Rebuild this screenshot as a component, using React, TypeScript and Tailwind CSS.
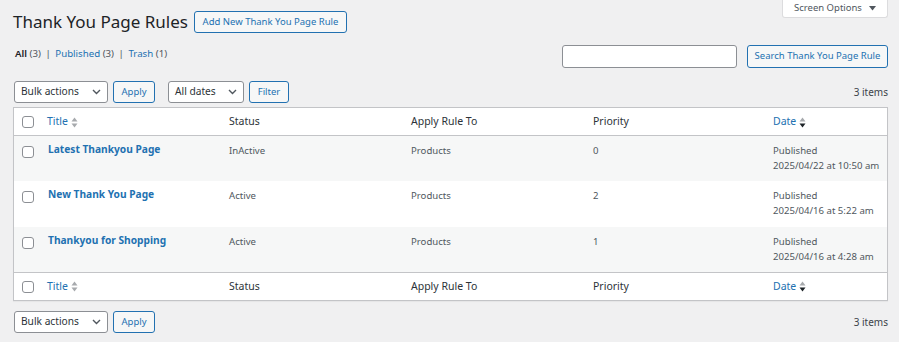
import React from "react";

const rows = [
  { title: "Latest Thankyou Page", status: "InActive", rule: "Products", priority: "0", date: "2025/04/22 at 10:50 am", bg: "bg-[#f6f7f7]", h: "h-[45px]" },
  { title: "New Thank You Page", status: "Active", rule: "Products", priority: "2", date: "2025/04/16 at 5:22 am", bg: "bg-white", h: "h-[46px]" },
  { title: "Thankyou for Shopping", status: "Active", rule: "Products", priority: "1", date: "2025/04/16 at 4:28 am", bg: "bg-[#f6f7f7]", h: "h-[45px]" },
];

const cols = "grid grid-cols-[23px_182px_182px_182px_180px_1fr]";

function Checkbox() {
  return <span className="block w-[12px] h-[12px] rounded-[3px] border border-[#8c8f94] bg-white" />;
}

function SortIcon({ active }: { active?: boolean }) {
  return (
    <svg width="7" height="11" viewBox="0 0 7 11" className="ml-[3px]">
      <path d="M3.5 0.5 L6.5 4.5 L0.5 4.5 Z" fill="#a7aaad" />
      <path d="M3.5 10.5 L6.5 6.5 L0.5 6.5 Z" fill={active ? "#1d2327" : "#a7aaad"} />
    </svg>
  );
}

function Chevron() {
  return (
    <svg width="9" height="6" viewBox="0 0 9 6">
      <path d="M1 1 L4.5 4.5 L8 1" fill="none" stroke="#50575e" strokeWidth="1.4" />
    </svg>
  );
}

function Select({ label, w }: { label: string; w: string }) {
  return (
    <div className={`${w} h-[22px] flex items-center justify-between bg-white border border-[#8c8f94] rounded-[3px] pl-[6px] pr-[6px] text-[10.2px] text-[#2c3338]`}>
      <span>{label}</span>
      <Chevron />
    </div>
  );
}

function Btn({ label, w }: { label: string; w: string }) {
  return (
    <div className={`${w} h-[22px] flex items-center justify-center bg-[#f6f7f7] border border-[#2271b1] rounded-[3px] text-[9.5px] text-[#2271b1]`}>
      {label}
    </div>
  );
}

function HeadRow({ top }: { top?: boolean }) {
  return (
    <div className={`${cols} h-[28px] items-center bg-white text-[10.5px] text-[#2c3338] ${top ? "border-b border-[#c3c4c7] pt-[1px]" : "border-t border-[#c3c4c7]"}`}>
      <div className="pl-[8px]"><Checkbox /></div>
      <div className="pl-[10px] flex items-center text-[#2271b1]">Title<SortIcon /></div>
      <div className="pl-[10px]">Status</div>
      <div className="pl-[10px]">Apply Rule To</div>
      <div className="pl-[10px]">Priority</div>
      <div className="pl-[10px] flex items-center text-[#2271b1]">Date<SortIcon active /></div>
    </div>
  );
}

export default function App() {
  return (
    <div className="relative min-h-[342px] bg-[#f0f0f1] font-['Noto_Sans',sans-serif] pl-[13px] pr-[11px]">
      <div className="absolute top-0 right-[11px] w-[106px] h-[18px] bg-white border border-t-0 border-[#dcdcde] rounded-b-[3px] flex items-center justify-center gap-[7px] text-[9.5px] text-[#50575e]">
        <span>Screen Options</span>
        <svg width="7" height="5" viewBox="0 0 7 5"><path d="M0 0 L7 0 L3.5 4.5 Z" fill="#50575e" /></svg>
      </div>

      <div className="pt-[11px] flex items-center gap-[6px]">
        <h1 className="text-[17px] leading-[22px] text-[#1d2327]">Thank You Page Rules</h1>
        <Btn label="Add New Thank You Page Rule" w="w-[153px]" />
      </div>

      <div className="mt-[12px] flex justify-between items-start">
        <div className="pt-[2px] pl-[2px] text-[9.7px] text-[#50575e] leading-[14px]">
          <span className="font-semibold text-[#1d2327]">All</span> (3) <span className="mx-[2px]">|</span>{" "}
          <span className="text-[#2271b1]">Published</span> (3) <span className="mx-[2px]">|</span>{" "}
          <span className="text-[#2271b1]">Trash</span> (1)
        </div>
        <div className="flex items-center gap-[10px]">
          <div className="w-[175px] h-[23px] bg-white border border-[#8c8f94] rounded-[3px]" />
          <Btn label="Search Thank You Page Rule" w="w-[141px] h-[23px]" />
        </div>
      </div>

      <div className="mt-[13px] flex items-center">
        <div className="pl-[1px] flex items-center gap-[5px]">
          <Select label="Bulk actions" w="w-[94px]" />
          <Btn label="Apply" w="w-[42px]" />
        </div>
        <div className="ml-[13px] flex items-center gap-[5px]">
          <Select label="All dates" w="w-[76px]" />
          <Btn label="Filter" w="w-[40px]" />
        </div>
        <div className="ml-auto text-[10px] text-[#3c434a]">3 items</div>
      </div>

      <div className="mt-[4px] border border-[#c3c4c7] bg-white shadow-[0_1px_1px_rgba(0,0,0,0.04)]">
        <HeadRow top />
        {rows.map((r) => (
          <div key={r.title} className={`${cols} ${r.bg} ${r.h} text-[9.6px] text-[#50575e] leading-[15px]`}>
            <div className="pl-[8px] pt-[10px]"><Checkbox /></div>
            <div className="pl-[11px] pt-[6px] font-bold text-[10.2px] text-[#2271b1]">{r.title}</div>
            <div className="pl-[10px] pt-[7px]">{r.status}</div>
            <div className="pl-[10px] pt-[7px]">{r.rule}</div>
            <div className="pl-[10px] pt-[7px]">{r.priority}</div>
            <div className="pl-[10px] pt-[7px]">Published<br />{r.date}</div>
          </div>
        ))}
        <HeadRow />
      </div>

      <div className="mt-[10px] flex items-center">
        <div className="pl-[1px] flex items-center gap-[5px]">
          <Select label="Bulk actions" w="w-[94px]" />
          <Btn label="Apply" w="w-[42px]" />
        </div>
        <div className="ml-auto text-[10px] text-[#3c434a]">3 items</div>
      </div>
    </div>
  );
}
